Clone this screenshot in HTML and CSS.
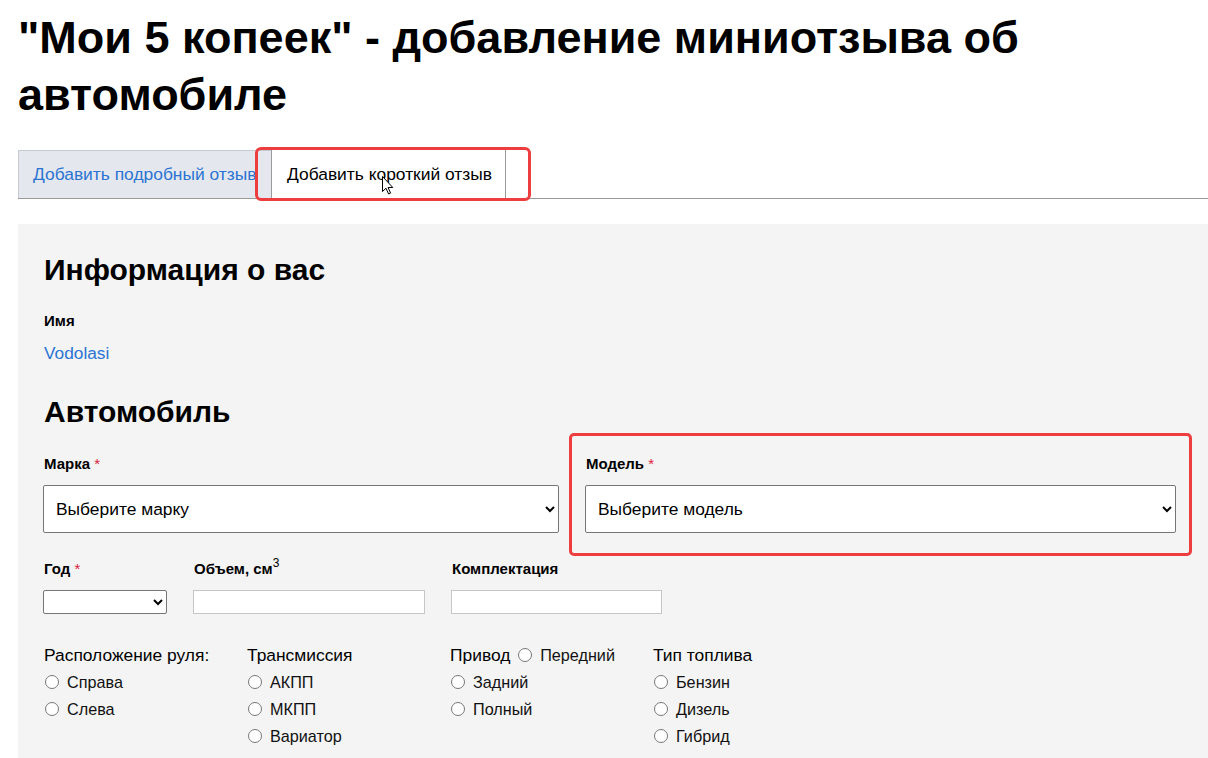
FILE: index.html
```html
<!DOCTYPE html>
<html lang="ru">
<head>
<meta charset="utf-8">
<title>Мои 5 копеек</title>
<link rel="stylesheet" href="styles.css">
</head>
<body>
<div class="page">
  <h1 class="title">"Мои 5 копеек" - добавление миниотзыва об автомобиле</h1>

  <div class="tabs">
    <a class="tab tab-inactive">Добавить подробный отзыв</a>
    <span class="tab tab-active">Добавить короткий отзыв</span>
    <span class="mark mark-tab"></span>
    <svg class="cursor" width="12" height="19" viewBox="0 0 12 19"><path d="M0.5 0.5 L0.5 15.5 L4 12.2 L6.6 18 L8.6 17.1 L6.1 11.5 L10.8 11.5 Z" fill="#fff" stroke="#000" stroke-width="1" stroke-linejoin="round"/></svg>
  </div>

  <div class="panel">
    <h2 class="section-title">Информация о вас</h2>
    <div class="field-label">Имя</div>
    <div class="user-name">Vodolasi</div>

    <h2 class="section-title section-car">Автомобиль</h2>

    <div class="row-main">
      <div class="field">
        <label class="field-label">Марка <span class="req">*</span></label>
        <select class="select-big"><option>Выберите марку</option></select>
      </div>
      <div class="field field-model">
        <label class="field-label">Модель <span class="req">*</span></label>
        <select class="select-big"><option>Выберите модель</option></select>
        <span class="mark mark-model"></span>
      </div>
    </div>

    <div class="row-small">
      <div class="field">
        <label class="field-label">Год <span class="req">*</span></label>
        <select class="select-year"><option></option></select>
      </div>
      <div class="field">
        <label class="field-label">Объем, см<sup>3</sup></label>
        <input class="input-vol" type="text">
      </div>
      <div class="field">
        <label class="field-label">Комплектация</label>
        <input class="input-comp" type="text">
      </div>
    </div>

    <div class="radios">
      <div class="rgroup">
        <div class="rhead">Расположение руля:</div>
        <label class="ropt"><input type="radio" name="wheel">Справа</label>
        <label class="ropt"><input type="radio" name="wheel">Слева</label>
      </div>
      <div class="rgroup">
        <div class="rhead">Трансмиссия</div>
        <label class="ropt"><input type="radio" name="tr">АКПП</label>
        <label class="ropt"><input type="radio" name="tr">МКПП</label>
        <label class="ropt"><input type="radio" name="tr">Вариатор</label>
      </div>
      <div class="rgroup">
        <div class="rhead">Привод <label class="ropt ropt-inline"><input type="radio" name="drive">Передний</label></div>
        <label class="ropt"><input type="radio" name="drive">Задний</label>
        <label class="ropt"><input type="radio" name="drive">Полный</label>
      </div>
      <div class="rgroup">
        <div class="rhead">Тип топлива</div>
        <label class="ropt"><input type="radio" name="fuel">Бензин</label>
        <label class="ropt"><input type="radio" name="fuel">Дизель</label>
        <label class="ropt"><input type="radio" name="fuel">Гибрид</label>
      </div>
    </div>
  </div>
</div>
</body>
</html>
```

FILE: styles.css
```css
html, body {
  margin: 0;
  padding: 0;
  background: #fff;
  overflow: hidden;
}

body {
  font-family: "Liberation Sans", Arial, sans-serif;
  color: #000;
}

.page {
  padding-left: 18px;
}

.title {
  margin: 9px 0 0;
  font-size: 45px;
  line-height: 57px;
  font-weight: bold;
  width: 1150px;
}

.tabs {
  position: relative;
  display: flex;
  margin-top: 27px;
  border-bottom: 1px solid #9a9a9a;
  height: 48px;
}

.tab {
  display: flex;
  align-items: center;
  height: 48px;
  box-sizing: border-box;
  font-size: 17.4px;
  white-space: nowrap;
}

.tab-inactive {
  width: 253px;
  padding: 0 0 0 14px;
  background: #e4e8ee;
  color: #2b74d2;
  border-top: 1px solid #c5c9d0;
  border-left: 1px solid #c5c9d0;
  overflow: hidden;
}

.tab-active {
  width: 235px;
  padding: 0 0 0 15px;
  background: #fff;
  color: #000;
  border-left: 1px solid #9a9a9a;
  border-right: 1px solid #9a9a9a;
  height: 49px;
  margin-bottom: -1px;
}

.mark {
  position: absolute;
  border: 3px solid #ee3d3f;
  border-radius: 6px;
  pointer-events: none;
}

.mark-tab {
  left: 237px;
  top: -3px;
  width: 270px;
  height: 48px;
}

.cursor {
  position: absolute;
  left: 364px;
  top: 26px;
}

.panel {
  margin-top: 25px;
  background: #f4f4f4;
  padding: 29px 0 40px 25px;
}

.section-title {
  margin: 0;
  font-size: 30px;
  line-height: 34px;
  font-weight: bold;
  padding-left: 1px;
}

.section-car {
  margin-top: 32px;
}

.field-label {
  display: block;
  font-size: 15px;
  line-height: 20px;
  font-weight: bold;
  padding-left: 1px;
}

.panel > .field-label {
  margin-top: 24px;
}

.field-label sup {
  font-size: 12px;
  font-weight: normal;
  line-height: 0;
  vertical-align: 7px;
}

.req {
  color: #d81b3c;
  font-weight: normal;
}

.user-name {
  margin-top: 12px;
  font-size: 17.3px;
  line-height: 20px;
  color: #2b74d2;
  padding-left: 1px;
}

.row-main {
  display: grid;
  grid-template-columns: 516px 591px;
  column-gap: 26px;
  margin-top: 25px;
}

.field {
  position: relative;
  display: flex;
  flex-direction: column;
  align-items: flex-start;
}

.select-big {
  margin-top: 11px;
  width: 100%;
  height: 48px;
  font-family: "Liberation Sans", Arial, sans-serif;
  font-size: 17.4px;
  color: #000;
  background: #fff;
  border: 1px solid #767676;
  border-radius: 2px;
  padding: 0 8px;
}

.mark-model {
  left: -16px;
  top: -21px;
  width: 617px;
  height: 117px;
  border-radius: 5px;
}

.row-small {
  display: flex;
  gap: 26px;
  margin-top: 26px;
}

.select-year {
  margin-top: 11px;
  width: 124px;
  height: 24px;
  background: #fff;
  border: 1px solid #767676;
  border-radius: 2px;
  font-size: 14px;
}

.input-vol,
.input-comp {
  margin-top: 11px;
  height: 24px;
  box-sizing: border-box;
  border: 1px solid #c6c6c6;
  background: #fff;
  border-radius: 0;
  padding: 0 4px;
  font-family: inherit;
  font-size: 14px;
}

.input-vol {
  width: 232px;
}

.input-comp {
  width: 211px;
}

.radios {
  display: grid;
  grid-template-columns: repeat(4, 203px);
  margin-top: 31px;
  padding-left: 1px;
}

.rgroup {
  display: flex;
  flex-direction: column;
}

.rhead {
  font-size: 17.4px;
  line-height: 20px;
  height: 20px;
  white-space: nowrap;
}

.ropt {
  display: flex;
  align-items: center;
  font-size: 16.2px;
  line-height: 20px;
  margin-top: 7px;
  color: #111;
}

.ropt input {
  margin: 0 8px 0 1px;
  width: 14px;
  height: 14px;
}

.ropt-inline {
  display: inline-flex;
  margin-top: 0;
  vertical-align: top;
  margin-left: 2px;
}
```
